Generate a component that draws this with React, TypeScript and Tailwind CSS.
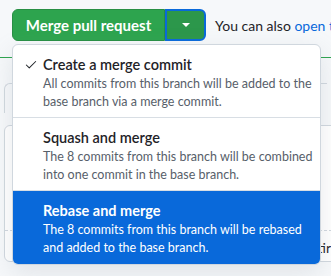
import { Check } from "lucide-react";

const font = { fontFamily: 'Lato, "Noto Sans", sans-serif' };

type Option = {
  title: string;
  lines: string[];
  checked?: boolean;
  active?: boolean;
};

const options: Option[] = [
  {
    title: "Create a merge commit",
    lines: ["All commits from this branch will be added to the", "base branch via a merge commit."],
    checked: true,
  },
  {
    title: "Squash and merge",
    lines: ["The 8 commits from this branch will be combined", "into one commit in the base branch."],
  },
  {
    title: "Rebase and merge",
    lines: ["The 8 commits from this branch will be rebased", "and added to the base branch."],
    active: true,
  },
];

function MergeButton() {
  return (
    <div className="flex h-[32px]">
      <button className="flex w-[153px] items-center justify-center rounded-l-md border border-[#288f44] bg-[#2da44e] text-[15px] font-bold text-white">
        Merge pull request
      </button>
      <button className="flex w-[41px] items-center justify-center rounded-r-md border-2 border-[#0969da] bg-[#2c974b]">
        <span className="h-0 w-0 border-x-4 border-t-4 border-x-transparent border-t-white" />
      </button>
    </div>
  );
}

function MenuItem({ title, lines, checked = false, active = false }: Option) {
  return (
    <div
      className={`flex h-[73px] gap-1 pt-[10px] pl-[10px] ${
        active ? "bg-[#0969da] text-white" : "text-[#1f2328]"
      }`}
    >
      <div className="flex h-5 w-4 items-center justify-center">
        {checked && <Check className="h-[14px] w-[14px]" strokeWidth={1.75} />}
      </div>
      <div className="whitespace-nowrap">
        <div className={`text-[14.5px] leading-5 ${active ? "font-bold" : "font-semibold"}`}>{title}</div>
        {lines.map((l) => (
          <div key={l} className={`text-[12.5px] leading-[18px] ${active ? "text-white" : "text-[#57606a]"}`}>
            {l}
          </div>
        ))}
      </div>
    </div>
  );
}

export default function App() {
  return (
    <div className="relative h-[276px] w-[331px] overflow-hidden bg-[#f6f8fa]" style={font}>
      <div className="flex items-center whitespace-nowrap pt-[9px] pl-3">
        <MergeButton />
        <span className="ml-[9px] text-[14px] text-[#1f2328]">
          You can also <span className="text-[#0969da]">open this</span>
        </span>
      </div>

      <div className="mt-[16px] h-px bg-[#2da44e]" />

      <div className="px-1">
        <div className="mt-[25px] h-[30px] rounded-tl-md border border-r-0 border-b-0 border-[#d0d7de] bg-[#f6f8fa]" />
        <div className="-mr-4 mt-[12px] flex h-[137px] flex-col rounded-md border border-[#d0d7de] bg-white">
          <div className="h-[104px]" />
          <div className="border-t border-dashed border-[#d0d7de]" />
          <div className="flex justify-end pt-[6px] pr-[11px] text-[14px] text-[#1f2328]">tir</div>
        </div>
      </div>

      <div className="absolute top-[44px] left-3 flex w-[309px] flex-col divide-y divide-[#d8dee4] overflow-hidden rounded-md border border-[#d0d7de] bg-white shadow-[0_8px_24px_rgba(140,149,159,0.2)]">
        {options.map((o) => (
          <MenuItem key={o.title} {...o} />
        ))}
      </div>
    </div>
  );
}
